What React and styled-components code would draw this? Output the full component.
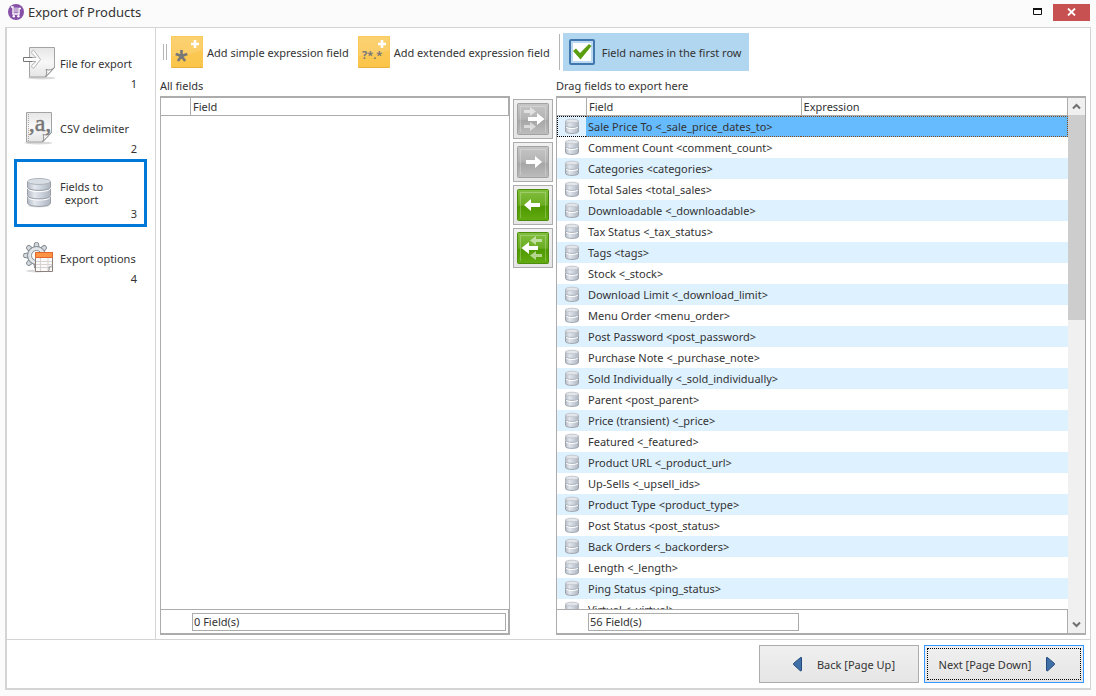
import React, { useState } from 'react';
import styled, { createGlobalStyle, css } from 'styled-components';

const fields = [
  'Sale Price To <_sale_price_dates_to>',
  'Comment Count <comment_count>',
  'Categories <categories>',
  'Total Sales <total_sales>',
  'Downloadable <_downloadable>',
  'Tax Status <_tax_status>',
  'Tags <tags>',
  'Stock <_stock>',
  'Download Limit <_download_limit>',
  'Menu Order <menu_order>',
  'Post Password <post_password>',
  'Purchase Note <_purchase_note>',
  'Sold Individually <_sold_individually>',
  'Parent <post_parent>',
  'Price (transient) <_price>',
  'Featured <_featured>',
  'Product URL <_product_url>',
  'Up-Sells <_upsell_ids>',
  'Product Type <product_type>',
  'Post Status <post_status>',
  'Back Orders <_backorders>',
  'Length <_length>',
  'Ping Status <ping_status>',
  'Virtual <_virtual>',
];

const GlobalStyle = createGlobalStyle`
  * {
    box-sizing: border-box;
  }

  body {
    margin: 0;
    background: #fbfbfb;
    color: #333;
    font-family: 'Noto Sans', sans-serif;
    font-size: 11px;
  }

  button {
    padding: 0;
    color: inherit;
    font: inherit;
  }
`;

const Window = styled.div`
  display: flex;
  flex-direction: column;
  height: 100vh;
  padding: 0 5px 6px;
`;

const TitleBar = styled.header`
  display: flex;
  align-items: center;
  flex: none;
  height: 27px;
  padding-left: 3px;
  padding-bottom: 3px;
`;

const Title = styled.h1`
  flex: 1;
  margin: 0 0 0 4px;
  font-size: 13px;
  font-weight: 400;
  line-height: 18px;
`;

const MaximizeButton = styled.button`
  display: flex;
  align-items: center;
  justify-content: center;
  width: 30px;
  height: 20px;
  border: 0;
  background: transparent;
`;

const CloseButton = styled.button`
  display: flex;
  align-items: center;
  justify-content: center;
  width: 37px;
  height: 17px;
  margin-right: 1px;
  border: 0;
  background: #c75050;
`;

const Frame = styled.div`
  display: flex;
  flex: 1;
  flex-direction: column;
  min-height: 0;
  border: 1px solid #d4d4d4;
  border-width: 1px 1px 2px 2px;
  background: #fff;
`;

const Content = styled.div`
  display: flex;
  flex: 1;
  min-height: 0;
`;

const Sidebar = styled.nav`
  display: flex;
  flex: none;
  flex-direction: column;
  gap: 3px;
  width: 149px;
  padding: 4px 11px 0 10px;
  border-right: 1px solid #d4d4d4;
`;

const StepButton = styled.button`
  display: grid;
  grid-template-columns: 43px 1fr;
  align-items: center;
  flex: none;
  position: relative;
  height: 62px;
  border: 0;
  background: #fff;
  text-align: left;
  outline: ${({ $active }) => ($active ? '3px solid #0078d7' : 'none')};
`;

const StepIcon = styled.span`
  display: flex;
  padding-left: 5px;
`;

const StepLabel = styled.span`
  justify-self: start;
  line-height: 13px;
  text-align: center;
  white-space: pre-line;
`;

const StepNumber = styled.span`
  position: absolute;
  right: 7px;
  bottom: 3px;
  line-height: 14px;
`;

const Main = styled.main`
  display: flex;
  flex: 1;
  flex-direction: column;
  min-width: 0;
  padding: 5px 4px 4px;
`;

const Toolbar = styled.div`
  display: flex;
  align-items: center;
  flex: none;
  height: 38px;
  padding-left: 3px;
`;

const Grip = styled.span`
  width: 4px;
  height: 16px;
  margin-right: 4px;
  border: 1px solid #b5b5b5;
  border-width: 0 1px;
`;

const ToolButton = styled.button`
  display: flex;
  align-items: center;
  gap: 4px;
  margin-right: 9px;
  border: 0;
  background: transparent;
  white-space: nowrap;
`;

const Separator = styled.span`
  width: 1px;
  height: 36px;
  margin-right: 3px;
  background: #b5b5b5;
`;

const ToggleLabel = styled.label`
  display: flex;
  align-items: center;
  gap: 7px;
  height: 38px;
  padding: 0 7px 0 6px;
  background: #b1d6f0;
  white-space: nowrap;
`;

const Tick = styled.span`
  display: grid;

  > * {
    grid-area: 1 / 1;
    place-self: center;
    pointer-events: none;
  }

  > input {
    pointer-events: auto;
  }

  > input:not(:checked) + svg {
    visibility: hidden;
  }
`;

const TickBox = styled.input`
  width: 26px;
  height: 26px;
  margin: 0;
  appearance: none;
  border: 2px solid #4277ae;
  border-radius: 2px;
  background: #fff;
  box-shadow: inset 0 0 0 2px #bcd9f2;
`;

const Lists = styled.div`
  display: flex;
  flex: 1;
  min-height: 0;
`;

const ListColumn = styled.section`
  display: flex;
  flex: ${({ $grow }) => $grow} 1 0;
  flex-direction: column;
  min-width: 0;
`;

const ListTitle = styled.h2`
  flex: none;
  height: 25px;
  margin: 0;
  font-size: 11px;
  font-weight: 400;
  line-height: 30px;
`;

const GridFrame = styled.div`
  display: flex;
  flex: 1;
  min-height: 0;
  border: 1px solid #acacac;
  border-width: 2px 1px;
  background: #fff;
`;

const GridBody = styled.div`
  display: flex;
  flex: 1;
  flex-direction: column;
  min-width: 0;
`;

const GridScroll = styled.div`
  flex: 1;
  min-height: 0;
  overflow: auto;
  scrollbar-width: none;
`;

const Table = styled.table`
  width: 100%;
  border-collapse: separate;
  border-spacing: 0;
  table-layout: fixed;
`;

const HeadCell = styled.th`
  position: sticky;
  top: 0;
  height: 18px;
  padding: 0 2px;
  border-bottom: 1px solid #acacac;
  background: #fff;
  font-weight: 400;
  line-height: 17px;
  text-align: left;

  & + & {
    border-left: 1px solid #acacac;
  }

  &:last-child {
    border-right: 1px solid #acacac;
  }
`;

const selectedCell = css`
  border: 1px dotted #8a4b1c;
  border-width: 1px 0;
  background: #66bbff;
  line-height: 19px;

  &:first-child {
    padding-left: 6px;
    border-color: #000;
    border-left-width: 1px;
    background: #dff1ff;
  }

  &:last-child {
    border-right-width: 1px;
  }
`;

const Row = styled.tr`
  height: 21px;

  &:nth-child(odd) {
    background: #def1ff;
  }

  > td {
    height: 21px;
    padding: 0 0 0 2px;
    line-height: 21px;
    white-space: nowrap;
  }

  > td:first-child {
    padding-left: 7px;
  }

  > td {
    ${({ $selected }) => $selected && selectedCell}
  }

  svg {
    display: block;
  }
`;

const GridFooter = styled.div`
  flex: none;
  height: 24px;
  padding: 3px 2px 2px 31px;
  border: 1px solid #acacac;
  border-width: 1px 1px 0 0;
`;

const Summary = styled.output`
  display: block;
  width: ${({ $width }) => $width};
  height: 18px;
  padding: 0 1px;
  border: 1px solid #acacac;
  line-height: 16px;
`;

const Scrollbar = styled.div`
  display: flex;
  flex: none;
  flex-direction: column;
  width: 17px;
  background: #f0f0f0;
`;

const ScrollButton = styled.button`
  display: flex;
  align-items: center;
  justify-content: center;
  width: 17px;
  height: 17px;
  border: 0;
  background: #f0f0f0;
`;

const ScrollTrack = styled.div`
  flex: 1;
`;

const ScrollThumb = styled.div`
  height: 41%;
  background: #cdcdcd;
`;

const MoveColumn = styled.div`
  display: flex;
  flex: none;
  flex-direction: column;
  gap: 3px;
  padding: 28px 3px 0;
`;

const MoveButton = styled.button`
  display: flex;
  align-items: center;
  justify-content: center;
  width: 40px;
  height: 40px;
  border: 1px solid #acacac;
  background: linear-gradient(#f0f0f0, #e5e5e5);
`;

const Footer = styled.footer`
  display: flex;
  flex: none;
  justify-content: flex-end;
  gap: 5px;
  padding: 5px 6px 5px 5px;
  border-top: 1px solid #d4d4d4;
`;

const PageButton = styled.button`
  display: flex;
  align-items: center;
  justify-content: center;
  gap: 14px;
  width: 160px;
  height: 38px;
  padding: ${({ $focused }) => ($focused ? '0 12px 0 0' : '0 0 0 8px')};
  border: 1px solid ${({ $focused }) => ($focused ? '#3399ff' : '#acacac')};
  background: linear-gradient(#f0f0f0, #e5e5e5);
  ${({ $focused }) =>
    $focused &&
    css`
      outline: 1px dotted #000;
      outline-offset: -4px;
    `}
`;

const LogoIcon = () => (
  <svg width="16" height="16" viewBox="0 0 16 16">
    <circle cx="8" cy="8" r="8" fill="#8650a8" />
    <path d="M3 3h2v7h6V4.500h2" fill="none" stroke="#fff" strokeWidth="1.400" />
    <path d="M7 3.500v5M9 3.500v5" stroke="#fff" strokeWidth="1" />
    <circle cx="5.800" cy="12.200" r="1.200" fill="#fff" />
    <circle cx="10.400" cy="12.200" r="1.200" fill="#fff" />
  </svg>
);

const PageShape = ({ x }) => (
  <>
    <ellipse cx={x + 12} cy="32" rx="14" ry="1.500" fill="#000" opacity="0.150" />
    <path d={`M${x} 1.500h25v20l-9 9.500h-16z`} fill="url(#paper)" stroke="#a3a3a3" />
    <path d={`M${x + 16} 31c1.500-3 1.500-5 .5-7.500 3 1 6 .5 8.500-2z`} fill="#f7f7f7" stroke="#8f8f8f" />
    <path d={`M${x + 18} 28.500c1.500-1 3-2.500 4.500-4.500`} fill="none" stroke="#aaa" />
  </>
);

const Gradients = () => (
  <svg width="0" height="0" style={{ position: 'absolute' }} aria-hidden="true">
    <defs>
      <linearGradient id="paper" x1="0" y1="0" x2="0" y2="1">
        <stop offset="0" stopColor="#e6e6e6" />
        <stop offset="0.500" stopColor="#f8f8f8" />
        <stop offset="1" stopColor="#e4e4e4" />
      </linearGradient>
      <linearGradient id="steel" x1="0" y1="0" x2="1" y2="0">
        <stop offset="0" stopColor="#b3bac3" />
        <stop offset="0.300" stopColor="#e3e7ee" />
        <stop offset="0.600" stopColor="#ccd3dd" />
        <stop offset="1" stopColor="#adb4be" />
      </linearGradient>
      <linearGradient id="gold" x1="0" y1="0" x2="0" y2="1">
        <stop offset="0" stopColor="#fbcb5e" />
        <stop offset="1" stopColor="#fbc549" />
      </linearGradient>
      <linearGradient id="grayTile" x1="0" y1="0" x2="0" y2="1">
        <stop offset="0" stopColor="#c6c6c6" />
        <stop offset="0.500" stopColor="#b3b3b3" />
        <stop offset="0.550" stopColor="#a6a6a6" />
        <stop offset="1" stopColor="#bdbdbd" />
      </linearGradient>
      <linearGradient id="greenTile" x1="0" y1="0" x2="0" y2="1">
        <stop offset="0" stopColor="#83bf3f" />
        <stop offset="0.500" stopColor="#6aad22" />
        <stop offset="0.550" stopColor="#4f9a00" />
        <stop offset="1" stopColor="#62ab12" />
      </linearGradient>
    </defs>
  </svg>
);

const FileIcon = () => (
  <svg width="34" height="34" viewBox="0 0 34 34">
    <PageShape x={7.500} />
    <path
      d="M9 11.500h5l-4-4c-1-1 .5-4 2-3l6.500 9-6.500 8.500c-1.500 1-3-1.500-2-3l4-3.500H9z"
      fill="#fafafa"
      stroke="#b5b5b5"
    />
    <path d="M10.500 11.500h-9v4h9" fill="#fff" stroke="#777" />
  </svg>
);

const DelimiterIcon = () => (
  <svg width="34" height="34" viewBox="0 0 34 34">
    <PageShape x={4.500} />
    <path d="M6.500 3v27" stroke="#aaa" strokeDasharray="1 1" />
    <text x="18" y="20" fill="#777" stroke="#777" strokeWidth="0.500" fontFamily="Liberation Serif, serif" fontSize="24" textAnchor="middle">
      ,a,
    </text>
  </svg>
);

const DatabaseIcon = () => (
  <svg width="34" height="34" viewBox="0 0 34 34">
    <ellipse cx="17" cy="30" rx="11" ry="1.500" fill="#000" opacity="0.120" />
    <path d="M5.500 21v6c0 4.500 23 4.500 23 0v-6z" fill="url(#steel)" stroke="#989fa9" />
    <path d="M5.500 13v6.500c0 4.500 23 4.500 23 0V13z" fill="url(#steel)" stroke="#989fa9" />
    <path d="M5.500 5.500V11c0 4.500 23 4.500 23 0V5.500z" fill="url(#steel)" stroke="#989fa9" />
    <path d="M6 13c2 3.500 20 3.500 22 0M6 21.500c2 3.500 20 3.500 22 0" fill="none" stroke="#fff" />
    <ellipse cx="17" cy="5.500" rx="11.500" ry="3" fill="#d9dee5" stroke="#adb4bc" />
  </svg>
);

const RowIcon = () => (
  <svg width="16" height="18" viewBox="0 0 16 18">
    <path d="M1.500 8v5.500c0 2.500 13 2.500 13 0V8z" fill="url(#steel)" stroke="#9da4ad" />
    <path d="M1.500 3v4.500c0 2.500 13 2.500 13 0V3z" fill="url(#steel)" stroke="#adb4bc" />
    <path d="M2 9c1.500 2 10.500 2 12 0" fill="none" stroke="#fff" />
    <ellipse cx="8" cy="3" rx="6.500" ry="1.800" fill="#e2e5ea" stroke="#c4c9cf" />
  </svg>
);

const OptionsIcon = () => (
  <svg width="34" height="34" viewBox="0 0 34 34">
    <ellipse cx="15" cy="30" rx="11" ry="1.500" fill="#000" opacity="0.150" />
    <g fill="#d5dade" stroke="#858c93">
      {[0, 45, 90, 135, 180, 225, 270, 315].map(angle => (
        <path key={angle} d="M12 6l.6-4q1.900-1.200 3.800 0L17 6z" transform={`rotate(${angle} 14.500 14.500)`} />
      ))}
      <circle cx="14.500" cy="14.500" r="9" />
      <circle cx="14.500" cy="14.500" r="8" fill="#e2e6e9" stroke="none" />
      <circle cx="14.500" cy="14.500" r="5" fill="#fff" />
    </g>
    <path d="M13.500 11.500h17v19h-17z" fill="#fbfafa" stroke="#8d7f7a" />
    <path d="M13.500 11.500h17v5h-17z" fill="#fa9444" stroke="#e3672c" />
    <path d="M14 20.500h16M14 23.500h16M14 26.500h16M18.500 17v13M26 17v13" stroke="#d8d3d3" />
    <path d="M26 30.500c2-2 1-3 1-4.500 2 0 3-1 3.500-2.500" fill="#eee" stroke="#8f8f8f" />
  </svg>
);

const Tile = ({ children }) => (
  <svg width="32" height="32" viewBox="0 0 32 32">
    <rect width="32" height="32" rx="1" fill="#e7b03c" />
    <rect width="32" height="31" rx="1" fill="url(#gold)" />
    <path d="M1 1h30v13c-10 4-20 6-30 6z" fill="#fff" opacity="0.120" />
    {children}
    <path d="M24 4v8M20 8h8" stroke="#fff" strokeWidth="2.600" />
  </svg>
);

const SimpleIcon = () => (
  <Tile>
    <path d="M10.500 20V14M10.500 20l5.800-2M10.500 20l3.600 5M10.500 20l-3.600 5M10.500 20l-5.800-2" stroke="#777" strokeWidth="2.600" />
  </Tile>
);

const ExtendedIcon = () => (
  <Tile>
    <text x="4" y="23" fill="#777" fontFamily="Noto Sans, sans-serif" fontSize="11" fontWeight="700">
      ?*.*
    </text>
  </Tile>
);

const CheckIcon = () => (
  <svg width="22" height="22" viewBox="0 0 22 22">
    <path d="m2 10 3-2.500 4 4.500L18 3l2.500 2L9.500 18.500z" fill="#5a9e10" />
  </svg>
);

const MoveIcon = ({ left, all, green }) => (
  <svg width="34" height="34" viewBox="0 0 34 34">
    <rect x="1.500" y="1.500" width="31" height="31" rx="1" fill={`url(#${green ? 'greenTile' : 'grayTile'})`} stroke={green ? '#4d8c0c' : '#a2a2a2'} />
    <path d="M4.500 30V4.500h25V30" fill="none" stroke="#fff" opacity="0.250" />
    <g transform={left ? 'matrix(-1 0 0 1 34 0)' : undefined} fill="#fff">
      {all && (
        <path d="M8 8h6V5l6 4.500-6 4.500v-3H8zM8 23h6v-3l6 4.500-6 4.500v-3H8z" opacity="0.550" />
      )}
      <path d={all ? 'M12 15h9v-4l7.500 6-7.500 6v-4h-9z' : 'M10 15h9v-4l7 6-7 6v-4h-9z'} />
    </g>
  </svg>
);

const TriangleIcon = ({ left }) => (
  <svg width="12" height="16" viewBox="0 0 12 16">
    <path
      d="M1.500 1.500Q2 1 3 2l6.500 5.500q.6.500 0 1L3 14.500q-1 1-1.500 0z"
      fill="#416fa8"
      stroke="#234b7b"
      transform={left ? 'matrix(-1 0 0 1 12 0)' : undefined}
    />
  </svg>
);

const Chevron = ({ down }) => (
  <svg width="9" height="7" viewBox="0 0 9 7">
    <path d={down ? 'm1 1.500 3.500 3.500L8 1.500' : 'M1 5.500 4.500 2 8 5.500'} fill="none" stroke="#707070" strokeWidth="2" />
  </svg>
);

const steps = [
  { label: 'File for export', icon: <FileIcon /> },
  { label: 'CSV delimiter', icon: <DelimiterIcon /> },
  { label: 'Fields to\nexport', icon: <DatabaseIcon /> },
  { label: 'Export options', icon: <OptionsIcon /> },
];

const App = () => {
  const [step, setStep] = useState(2);
  const [selected, setSelected] = useState(0);
  const [firstRow, setFirstRow] = useState(true);

  return (
    <Window>
      <GlobalStyle />
      <Gradients />
      <TitleBar>
        <LogoIcon />
        <Title>Export of Products</Title>
        <MaximizeButton aria-label="Maximize">
          <svg width="10" height="8" viewBox="0 0 10 8">
            <path d="M.5 1.500h8v5h-8z" fill="none" stroke="#111" />
            <path d="M0 1h9" stroke="#111" strokeWidth="2" />
          </svg>
        </MaximizeButton>
        <CloseButton aria-label="Close">
          <svg width="9" height="8" viewBox="0 0 9 8">
            <path d="m1 .5 7 7M8 .5l-7 7" stroke="#fff" strokeWidth="1.800" />
          </svg>
        </CloseButton>
      </TitleBar>

      <Frame>
        <Content>
          <Sidebar>
            {steps.map(({ label, icon }, index) => (
              <StepButton key={label} $active={index === step} onClick={() => setStep(index)}>
                <StepIcon>{icon}</StepIcon>
                <StepLabel>{label}</StepLabel>
                <StepNumber>{index + 1}</StepNumber>
              </StepButton>
            ))}
          </Sidebar>

          <Main>
            <Toolbar>
              <Grip />
              <ToolButton>
                <SimpleIcon />
                Add simple expression field
              </ToolButton>
              <ToolButton>
                <ExtendedIcon />
                Add extended expression field
              </ToolButton>
              <Separator />
              <ToggleLabel>
                <Tick>
                  <TickBox type="checkbox" checked={firstRow} onChange={e => setFirstRow(e.target.checked)} />
                  <CheckIcon />
                </Tick>
                Field names in the first row
              </ToggleLabel>
            </Toolbar>

            <Lists>
              <ListColumn $grow={350}>
                <ListTitle>All fields</ListTitle>
                <GridFrame>
                  <GridBody>
                    <GridScroll>
                      <Table>
                        <colgroup>
                          <col width="29" />
                          <col />
                        </colgroup>
                        <thead>
                          <tr>
                            <HeadCell />
                            <HeadCell>Field</HeadCell>
                          </tr>
                        </thead>
                      </Table>
                    </GridScroll>
                    <GridFooter>
                      <Summary $width="100%">0 Field(s)</Summary>
                    </GridFooter>
                  </GridBody>
                </GridFrame>
              </ListColumn>

              <MoveColumn>
                <MoveButton aria-label="Add all fields">
                  <MoveIcon all />
                </MoveButton>
                <MoveButton aria-label="Add field">
                  <MoveIcon />
                </MoveButton>
                <MoveButton aria-label="Remove field">
                  <MoveIcon left green />
                </MoveButton>
                <MoveButton aria-label="Remove all fields">
                  <MoveIcon left all green />
                </MoveButton>
              </MoveColumn>

              <ListColumn $grow={530}>
                <ListTitle>Drag fields to export here</ListTitle>
                <GridFrame>
                  <GridBody>
                    <GridScroll>
                      <Table>
                        <colgroup>
                          <col width="29" />
                          <col width="42%" />
                          <col />
                        </colgroup>
                        <thead>
                          <tr>
                            <HeadCell />
                            <HeadCell>Field</HeadCell>
                            <HeadCell>Expression</HeadCell>
                          </tr>
                        </thead>
                        <tbody>
                          {fields.map((field, index) => (
                            <Row key={field} $selected={index === selected} onClick={() => setSelected(index)}>
                              <td>
                                <RowIcon />
                              </td>
                              <td>{field}</td>
                              <td />
                            </Row>
                          ))}
                        </tbody>
                      </Table>
                    </GridScroll>
                    <GridFooter>
                      <Summary $width="211px">56 Field(s)</Summary>
                    </GridFooter>
                  </GridBody>
                  <Scrollbar>
                    <ScrollButton aria-label="Scroll up">
                      <Chevron />
                    </ScrollButton>
                    <ScrollTrack>
                      <ScrollThumb />
                    </ScrollTrack>
                    <ScrollButton aria-label="Scroll down">
                      <Chevron down />
                    </ScrollButton>
                  </Scrollbar>
                </GridFrame>
              </ListColumn>
            </Lists>
          </Main>
        </Content>

        <Footer>
          <PageButton>
            <TriangleIcon left />
            Back [Page Up]
          </PageButton>
          <PageButton $focused>
            Next [Page Down]
            <TriangleIcon />
          </PageButton>
        </Footer>
      </Frame>
    </Window>
  );
};

export default App;
